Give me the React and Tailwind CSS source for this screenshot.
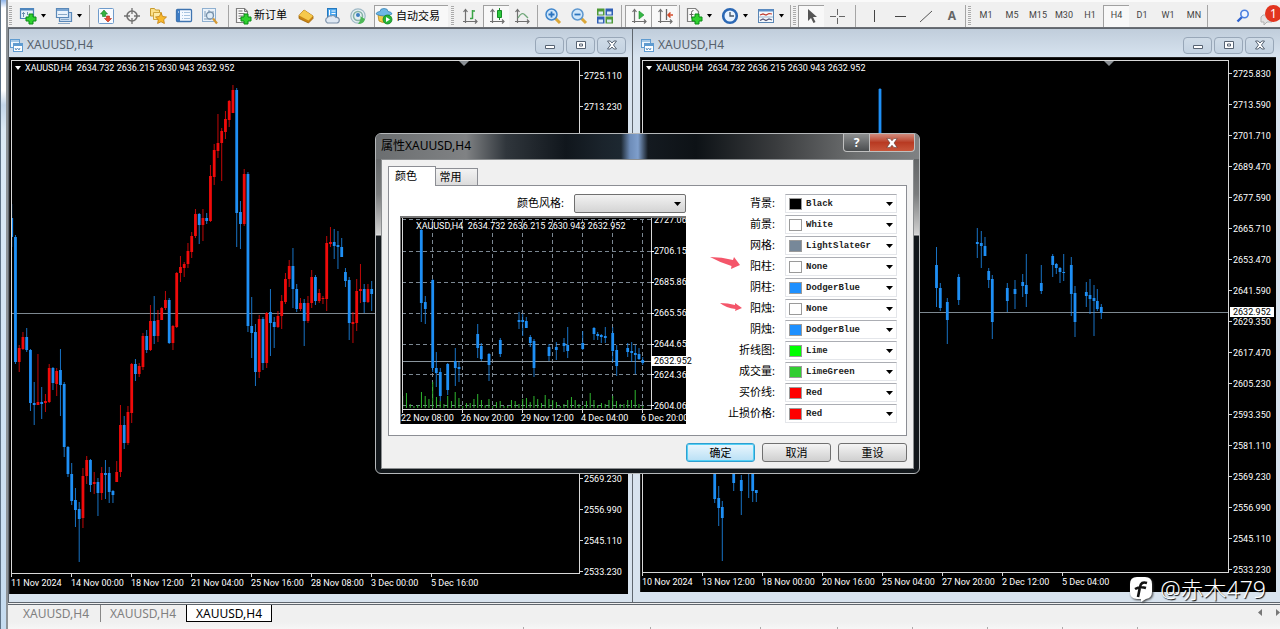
import { useState } from 'react';
import clsx from 'clsx';

const BLUE = '#1e8ff5';
const RED = '#f00a0a';

// [color, high, top, bottom, low]
const LEFT_CANDLES = [
  ['b', 204, 218, 237, 247], ['b', 235, 237, 362, 364], ['r', 345, 348, 362, 372], ['r', 332, 337, 349, 350],
  ['b', 328, 337, 350, 352], ['b', 349, 350, 403, 411], ['b', 382, 403, 405, 425], ['r', 354, 402, 405, 405],
  ['b', 387, 402, 404, 419], ['r', 394, 401, 403, 412], ['r', 364, 368, 402, 403], ['b', 367, 368, 383, 390],
  ['r', 368, 371, 384, 396], ['b', 349, 370, 385, 416], ['b', 382, 384, 447, 457], ['b', 446, 447, 474, 477],
  ['b', 463, 474, 501, 505], ['b', 488, 500, 510, 527], ['b', 502, 509, 519, 562], ['r', 468, 476, 518, 528],
  ['r', 456, 460, 476, 484], ['b', 459, 460, 485, 492], ['r', 472, 482, 484, 494], ['b', 478, 482, 493, 516],
  ['r', 467, 473, 493, 500], ['b', 460, 473, 475, 499], ['b', 467, 473, 492, 503], ['b', 490, 491, 495, 503],
  ['r', 461, 472, 482, 482], ['r', 405, 425, 472, 477], ['b', 416, 425, 443, 449], ['r', 406, 412, 443, 445],
  ['r', 363, 364, 413, 423], ['b', 359, 364, 374, 381], ['r', 363, 366, 374, 377], ['r', 333, 336, 367, 370],
  ['b', 330, 336, 350, 353], ['r', 305, 321, 350, 351], ['b', 296, 321, 336, 344], ['r', 310, 320, 336, 342],
  ['r', 307, 308, 320, 320], ['r', 291, 300, 308, 310], ['b', 298, 300, 343, 344], ['r', 325, 326, 343, 350],
  ['r', 272, 273, 327, 328], ['r', 256, 267, 273, 282], ['r', 262, 264, 268, 277], ['r', 243, 251, 264, 268],
  ['r', 232, 236, 252, 258], ['r', 209, 214, 236, 238], ['b', 213, 214, 225, 244], ['r', 209, 218, 225, 241],
  ['b', 213, 218, 221, 224], ['r', 165, 176, 221, 222], ['r', 144, 150, 177, 185], ['r', 114, 143, 151, 158],
  ['r', 128, 131, 143, 181], ['r', 111, 119, 132, 139], ['r', 100, 101, 120, 127], ['r', 85, 90, 113, 113],
  ['b', 88, 90, 213, 247], ['b', 201, 212, 224, 249], ['r', 169, 174, 224, 226], ['b', 172, 174, 326, 332],
  ['b', 297, 326, 333, 358], ['b', 324, 332, 372, 386], ['r', 315, 319, 372, 378], ['b', 317, 319, 363, 370],
  ['r', 312, 313, 363, 368], ['b', 289, 312, 323, 356], ['b', 317, 322, 327, 348], ['r', 311, 316, 327, 328],
  ['r', 295, 301, 316, 329], ['r', 273, 279, 302, 304], ['r', 260, 266, 279, 287], ['b', 248, 266, 289, 308],
  ['b', 284, 289, 309, 312], ['r', 298, 303, 309, 311], ['b', 299, 303, 321, 346], ['r', 296, 303, 321, 323],
  ['r', 270, 277, 303, 308], ['b', 275, 277, 301, 305], ['r', 289, 293, 301, 303], ['r', 296, 298, 299, 304],
  ['r', 236, 243, 299, 311], ['r', 227, 242, 244, 247], ['b', 229, 242, 246, 259], ['b', 231, 245, 247, 269],
  ['b', 238, 247, 257, 257], ['b', 268, 272, 281, 287], ['b', 277, 280, 323, 340], ['r', 312, 322, 324, 343],
  ['r', 279, 291, 323, 331], ['r', 264, 289, 291, 303], ['b', 284, 289, 302, 313], ['r', 284, 289, 302, 303],
  ['b', 281, 289, 294, 311],
].map(([color, ...prices], i) => [11.7 + i * 3.75, ...prices, color]);

// [x, high, top, bottom, low]
const RIGHT_CANDLES = [
  [714.7, 440, 445, 499, 503], [718.7, 486, 498, 508, 526], [722.3, 501, 507, 518, 561], [733.7, 440, 450, 483, 491],
  [741.3, 475, 480, 491, 515], [748.7, 440, 450, 452, 498], [752.7, 440, 450, 491, 502], [756.3, 490, 490, 493, 502],
  [880, 88, 89, 160, 170], [936.5, 247, 265, 288, 307], [940.3, 283, 288, 308, 311], [947.3, 298, 302, 320, 344],
  [958.7, 274, 277, 300, 305], [977.3, 228, 242, 244, 258], [981.3, 231, 243, 246, 268], [985, 237, 246, 256, 256],
  [988.7, 268, 271, 280, 288], [992.3, 275, 279, 322, 339], [1007.3, 283, 288, 301, 312], [1015, 280, 289, 294, 309],
  [1022.7, 274, 282, 286, 297], [1026.3, 254, 285, 294, 307], [1041.3, 265, 283, 291, 294], [1052.7, 254, 256, 265, 277],
  [1056.3, 263, 264, 268, 274], [1060, 267, 268, 272, 283], [1063.7, 254, 272, 273, 281], [1071.3, 257, 265, 294, 316],
  [1075, 286, 293, 322, 337], [1086.3, 282, 292, 296, 307], [1090, 279, 295, 299, 314], [1094, 285, 298, 301, 336],
  [1097.3, 289, 301, 309, 311], [1101.3, 304, 307, 313, 319],
];

const PREVIEW_CANDLES = [
  [421.3, 229, 230, 303, 322], [425.3, 296, 302, 309, 324], [432.7, 279, 280, 368, 372], [436.3, 352, 368, 373, 387],
  [440.3, 368, 372, 396, 401], [447.7, 363, 364, 390, 395], [455.3, 348, 361, 368, 386], [459, 362, 367, 369, 382],
  [477.7, 324, 334, 348, 358], [481.3, 343, 346, 359, 361], [489, 353, 354, 365, 381], [500.3, 338, 340, 354, 357],
  [519, 312, 320, 322, 329], [522.7, 314, 320, 322, 336], [526.3, 317, 321, 328, 328], [530.3, 335, 337, 343, 347],
  [534, 339, 341, 368, 377], [549, 344, 347, 356, 361], [556.3, 342, 347, 350, 360], [564, 338, 343, 346, 352],
  [567.7, 327, 345, 351, 358], [582.7, 331, 343, 349, 350], [594, 327, 328, 334, 340], [597.7, 332, 334, 336, 340],
  [601.3, 334, 335, 337, 343], [605.3, 327, 336, 338, 343], [612.7, 327, 333, 351, 362], [616.7, 345, 350, 366, 376],
  [627.7, 343, 348, 352, 357], [631.7, 342, 351, 353, 362], [635.3, 345, 353, 355, 374], [639, 348, 354, 359, 360],
  [642.7, 357, 360, 363, 365],
];

const VOLUMES = [
  12, 15, 4, 2, 3, 16, 12, 9, 26, 11, 7, 4, 12, 7, 16, 10, 2, 5, 5, 9, 14, 8, 3, 9, 2, 6, 7, 2, 2, 8, 7, 4, 9, 10,
  6, 12, 9, 5, 13, 9, 8, 6, 2, 4, 8, 11, 8, 4, 2, 7, 15, 8, 3, 5, 4, 8, 12, 7, 4, 4, 8, 8, 18, 4, 2,
];

const LEFT_PRICES = [
  '2725.110', '2713.230', '2701.350', '2689.110', '2677.230', '2665.350', '2653.110', '2641.230', '2629.350',
  '2617.110', '2605.230', '2593.350', '2581.110', '2569.230', '2556.990', '2545.110', '2533.230',
];
const RIGHT_PRICES = [
  '2725.830', '2713.590', '2701.710', '2689.470', '2677.590', '2665.710', '2653.470', '2641.590', '2629.350',
  '2617.470', '2605.230', '2593.350', '2581.110', '2569.230', '2556.990', '2545.110', '2533.230',
];
const LEFT_TIMES = ['11 Nov 2024', '14 Nov 00:00', '18 Nov 12:00', '21 Nov 04:00', '25 Nov 16:00', '28 Nov 08:00', '3 Dec 00:00', '5 Dec 16:00'];
const RIGHT_TIMES = ['10 Nov 2024', '13 Nov 12:00', '18 Nov 00:00', '20 Nov 16:00', '25 Nov 04:00', '27 Nov 20:00', '2 Dec 12:00', '5 Dec 04:00'];

const COLORS = {
  Black: '#000000',
  White: '#ffffff',
  LightSlateGr: '#778899',
  None: '#ffffff',
  DodgerBlue: '#1e90ff',
  Lime: '#00ff00',
  LimeGreen: '#32cd32',
  Red: '#ff0000',
};

const COLOR_FIELDS = [
  ['背景', 'Black'],
  ['前景', 'White'],
  ['网格', 'LightSlateGr'],
  ['阳柱', 'None'],
  ['阴柱', 'DodgerBlue'],
  ['阳烛', 'None'],
  ['阴烛', 'DodgerBlue'],
  ['折线图', 'Lime'],
  ['成交量', 'LimeGreen'],
  ['买价线', 'Red'],
  ['止损价格', 'Red'],
];

/* ---------- 工具栏 ---------- */

const Icon = ({ children }) => (
  <svg width="18" height="18" viewBox="0 0 18 18" fill="none" className="shrink-0">{children}</svg>
);

const Plus = ({ x, y }) => (
  <path transform={`translate(${x} ${y})`} d="M3 0h4v3h3v4H7v3H3V7H0V3h3z" fill="#2fd12f" stroke="#0b8a16" />
);

const Axes = () => (
  <path d="M4.500 3v13M2 14.500h14M2.500 5l2-2.500L6.500 5M14 12.500l2 2-2 2" stroke="#707070" strokeWidth="1.200" />
);

const icons = {
  newChart: (
    <Icon>
      <path d="M1.500 1.500h13v10h-13z" fill="#e6f1fb" stroke="#4f86bd" strokeWidth="1.200" />
      <path d="M1 2.500h14" stroke="#4f86bd" strokeWidth="2" />
      <path d="M4.500 5v5M3 6.500h3M8.500 5v3" stroke="#6a8fae" />
      <Plus x={7} y={7} />
    </Icon>
  ),
  profiles: (
    <Icon>
      <path d="M4.500 5.500h12v9h-12z" fill="#c9dcf0" stroke="#5a88b8" strokeWidth="1.200" />
      <path d="M1.500 1.500h12v9h-12z" fill="#eaf3fc" stroke="#5a88b8" strokeWidth="1.200" />
      <path d="M2 3h11" stroke="#79a5d3" strokeWidth="2" />
      <path d="M3 7.500h9M6 12.500h8M3 16.500h12" stroke="#8ba9c7" />
    </Icon>
  ),
  market: (
    <Icon>
      <rect x="1.500" y="1.500" width="15" height="15" rx="1" fill="#f8fbff" stroke="#6f9bcb" />
      <path d="M7 3 10.500 7H8.500v2.500h-3V7H3.500z" fill="#34b341" stroke="#128023" strokeWidth=".6" />
      <path d="M11 15 7.500 11.500h2V9h3v2.500h2z" fill="#e84c32" stroke="#b02a16" strokeWidth=".6" />
    </Icon>
  ),
  target: (
    <Icon>
      <circle cx="9" cy="9" r="5" stroke="#707070" strokeWidth="1.600" />
      <path d="M9 1v6M9 11v6M1 9h6M11 9h6" stroke="#707070" strokeWidth="1.300" />
    </Icon>
  ),
  navigator: (
    <Icon>
      <path d="M1.500 1.500h4l1 1.500h4v6h-9z" fill="#fbe08a" stroke="#c89b2e" />
      <path d="M4.500 5.500h8v7h-8z" fill="#fdeaa6" stroke="#d1a63c" />
      <path d="m12 6 1.700 3.500 3.800.5-2.800 2.700.7 3.800-3.400-1.800-3.400 1.800.7-3.800L6.500 10l3.800-.5z" fill="#f8b92c" stroke="#c07f12" strokeWidth=".8" />
    </Icon>
  ),
  terminal: (
    <Icon>
      <rect x="1.500" y="2.500" width="15" height="12" rx="1" fill="#f4f9ff" stroke="#3f74b0" strokeWidth="1.300" />
      <path d="M2 3h3v11H2z" fill="#3d7cc4" />
      <path d="M7 5.500h1M9 5.500h6M7 8.500h1M9 8.500h6M7 11.500h1M9 11.500h6" stroke="#a8c4e0" />
      <path d="M3 5h1" stroke="#fff" />
    </Icon>
  ),
  tester: (
    <Icon>
      <rect x="1.500" y="1.500" width="13" height="13" fill="#eaf2fa" stroke="#8fb0d0" />
      <path d="M4 4v6M8 3v4M12 4v6M3 12h7" stroke="#7e9cb8" />
      <circle cx="9" cy="8.500" r="3.500" fill="#dcebf7" fillOpacity=".8" stroke="#7690aa" strokeWidth="1.300" />
      <path d="m12 11.500 4 5" stroke="#d59a35" strokeWidth="2.200" />
    </Icon>
  ),
  order: (
    <Icon>
      <path d="M2.500 1.500h8l3 3v11h-11z" fill="#fafafa" stroke="#808080" strokeWidth="1.200" />
      <path d="M10.500 1.500v3h3M4.500 6.500h6M4.500 9h5M4.500 4h4M4.500 11.500h3" stroke="#777" />
      <Plus x={7} y={7} />
    </Icon>
  ),
  gold: (
    <Icon>
      <path d="m2 8.500 5-5.500 9 6v2.500L11.500 16 2 11.500z" fill="#c98413" stroke="#a0660a" strokeWidth=".8" />
      <path d="m2 8.500 5-5.500 9 6-4.500 4.500z" fill="#f6c94c" />
    </Icon>
  ),
  cloud: (
    <Icon>
      <rect x="4.500" y="1.500" width="9" height="9" fill="#4aa6ee" stroke="#2578bd" />
      <path d="M6.500 3v6M8.500 4h4M8.500 6.500h4" stroke="#fff" />
      <path d="M4.500 16a3 3 0 0 1 0-5.500q1-2 3.500-1.500 3-1.500 5 1.500a2.700 2.700 0 0 1 1 5.500z" fill="#dfe8f3" stroke="#7d92ab" strokeWidth="1.200" />
    </Icon>
  ),
  signal: (
    <Icon>
      <circle cx="9" cy="9" r="7.200" fill="#e4eef2" stroke="#9fb9c6" strokeWidth="1.200" />
      <circle cx="9" cy="9" r="4.500" stroke="#86b3a6" strokeWidth="1.500" />
      <path d="M9 8c4 1 3 5 0 9 4 0 6.500-2 7-5z" fill="#4db857" />
      <circle cx="9" cy="8" r="2" fill="#3f7fc2" />
    </Icon>
  ),
  auto: (
    <Icon>
      <path d="M3 8h11l-1 6q-5 3-9 0z" fill="#f3c948" stroke="#b68a1c" strokeWidth=".8" />
      <path d="M1 7q0-2 4-2.500 0-3 4-3t4 3q4 .5 4 2.500-8 4-16 0z" fill="#6eb7e6" stroke="#3884b5" strokeWidth=".8" />
      <circle cx="12.500" cy="12.500" r="4.500" fill="#25b436" stroke="#138322" strokeWidth=".8" />
      <path d="M11 10v5l4-2.500z" fill="#fff" />
    </Icon>
  ),
  bars: (
    <Icon>
      <Axes />
      <path d="M11.500 3v9M9 11.500h2.500M11.500 4h2.500" stroke="#3aa345" strokeWidth="1.500" />
    </Icon>
  ),
  candles: (
    <Icon>
      <Axes />
      <path d="M11.500 1v12" stroke="#168a26" />
      <path d="M9.500 3.500h4v7h-4z" fill="#2cc93c" stroke="#168a26" />
    </Icon>
  ),
  line: (
    <Icon>
      <Axes />
      <path d="M5 11q4-7 7-3l3 3" stroke="#6ea678" strokeWidth="1.300" />
    </Icon>
  ),
  zoomIn: (
    <Icon>
      <path d="m11 11 5 5" stroke="#dba739" strokeWidth="3" />
      <circle cx="7.500" cy="7.500" r="5.500" fill="#cfe6fa" stroke="#3f86cc" strokeWidth="1.500" />
      <path d="M4.500 7.500h6M7.500 4.500v6" stroke="#2c74be" strokeWidth="1.800" />
    </Icon>
  ),
  zoomOut: (
    <Icon>
      <path d="m11 11 5 5" stroke="#dba739" strokeWidth="3" />
      <circle cx="7.500" cy="7.500" r="5.500" fill="#cfe6fa" stroke="#5d97cf" strokeWidth="1.500" />
      <path d="M4.500 7.500h6" stroke="#2c74be" strokeWidth="1.800" />
    </Icon>
  ),
  tile: (
    <Icon>
      <path d="M1 1.500h7.500v7H1zM9.500 9.500H17v7H9.500z" fill="#4f9a37" />
      <path d="M9.500 1.500H17v7H9.500zM1 9.500h7.500v7H1z" fill="#2f5fb5" />
      <path d="M2.500 4.500H7v3H2.500zM11 4.500h4.500v3H11zM2.500 12.500H7v3H2.500zM11 12.500h4.500v3H11z" fill="#dcebf8" />
    </Icon>
  ),
  scroll: (
    <Icon>
      <Axes />
      <path d="M9 4v8l5-4z" fill="#35b845" stroke="#1b8a2a" strokeWidth=".6" />
    </Icon>
  ),
  shift: (
    <Icon>
      <Axes />
      <path d="M10.500 2v11" stroke="#666" strokeWidth="1.300" />
      <path d="M17 8h-5M14.500 5.500 12 8l2.500 2.500" stroke="#d24a2a" strokeWidth="1.500" />
    </Icon>
  ),
  indicators: (
    <Icon>
      <path d="M2.500 1.500h8l3 3v10h-11z" fill="#fafafa" stroke="#808080" strokeWidth="1.200" />
      <path d="M8.500 3.500q-2 0-2 2v6M4.500 7.500h4" stroke="#666" />
      <Plus x={7} y={7} />
    </Icon>
  ),
  clock: (
    <Icon>
      <circle cx="9" cy="9" r="6.800" fill="#e8f3ff" stroke="#2a67b4" strokeWidth="2.600" />
      <path d="M9 5v4h4" stroke="#456" strokeWidth="1.300" />
    </Icon>
  ),
  template: (
    <Icon>
      <rect x="1.500" y="2.500" width="15" height="13" fill="#f5f9fd" stroke="#5a86b5" />
      <path d="M2 3.500h14" stroke="#5a8fca" strokeWidth="2" />
      <path d="m3 8 3-1 3 1 3-1.500 3 .5" stroke="#c0392b" strokeWidth="1.200" />
      <path d="M2 10h14" stroke="#9db6cf" />
      <path d="m3 13.500 3-1.500 3 1.500 3-1.500 3 1" stroke="#557" strokeWidth="1.200" />
    </Icon>
  ),
  cursor: (
    <Icon><path d="M5 2v12l3-3 2.500 5 2-1-2.500-5h4z" fill="#555" /></Icon>
  ),
  cross: (
    <Icon><path d="M9.500 2v6M9.500 11v6M2 9.500h6M11 9.500h6" stroke="#666" /></Icon>
  ),
  vline: (
    <Icon><path d="M9.500 3v12" stroke="#444" /></Icon>
  ),
  hline: (
    <Icon><path d="M4 9.500h11" stroke="#444" /></Icon>
  ),
  trend: (
    <Icon><path d="M3 15 15 4" stroke="#555" /></Icon>
  ),
};

const Sep = ({ className }) => <span className={clsx('h-[22px] w-px shrink-0 bg-[#a5a5a5]', className)} />;

const Grip = ({ className }) => (
  <span className={clsx('h-5 w-[3px] shrink-0 bg-[repeating-linear-gradient(to_bottom,#aaa_0,#aaa_1px,#f4f4f4_1px,#f4f4f4_2px)]', className)} />
);

function Tool({ label, name, active, caret, children }) {
  return (
    <button
      type="button"
      aria-label={label}
      className={clsx(
        'flex h-[22px] shrink-0 items-center',
        caret ? 'w-9' : 'w-[26px] justify-center',
        active && 'border-t border-l border-[#a0a0a0] bg-[#f8f8f8]'
      )}
    >
      {caret ? <span className="flex w-6 justify-center">{icons[name]}</span> : icons[name]}
      {caret && <svg width="7" height="4" viewBox="0 0 7 4"><path d="M1 0h5L3.500 3.500z" fill="#000" /></svg>}
      {children}
    </button>
  );
}

function Toolbar() {
  const [frame, setFrame] = useState('H4');
  return (
    <header className="flex h-7 shrink-0 items-center overflow-hidden border-t-2 border-b border-t-[#fafafa] border-b-[#6b6f75] bg-[#f0f0f0] pt-[2px] text-black">
      <Grip className="mr-1 ml-px" />
      <Tool label="新图表" name="newChart" caret />
      <Tool label="配置" name="profiles" caret />
      <Sep className="mr-[3px] ml-px" />
      <Tool label="市场报价" name="market" />
      <Tool label="数据窗口" name="target" />
      <Tool label="导航" name="navigator" />
      <Tool label="终端" name="terminal" />
      <Tool label="测试" name="tester" />
      <Sep className="mx-[5px]" />
      <button type="button" className="flex h-[22px] shrink-0 items-center gap-[2px] pr-[6px] text-[11px]">
        {icons.order}
        新订单
      </button>
      <Tool label="编辑器" name="gold" />
      <Tool label="云" name="cloud" />
      <Tool label="信号" name="signal" />
      <button type="button" className="ml-[3px] flex h-[22px] w-[74px] shrink-0 items-center gap-[3px] border-t border-l border-[#a0a0a0] bg-[#f8f8f8] text-[11px]">
        {icons.auto}
        自动交易
      </button>
      <Grip className="mx-[3px]" />
      <Tool label="柱状图" name="bars" />
      <Tool label="蜡烛图" name="candles" active />
      <Tool label="折线图" name="line" />
      <Sep className="mx-[2px]" />
      <Tool label="放大" name="zoomIn" />
      <Tool label="缩小" name="zoomOut" />
      <Tool label="平铺窗口" name="tile" />
      <Sep className="mx-[3px]" />
      <Tool label="自动滚动" name="scroll" active />
      <Tool label="图表平移" name="shift" active />
      <Sep className="mx-[2px]" />
      <Tool label="指标" name="indicators" caret />
      <Tool label="时段" name="clock" caret />
      <Tool label="模板" name="template" caret />
      <Sep />
      <Grip className="mx-[2px]" />
      <Tool label="光标" name="cursor" active />
      <Tool label="十字准线" name="cross" />
      <Sep className="mx-[5px]" />
      <Tool label="垂直线" name="vline" />
      <Tool label="水平线" name="hline" />
      <Tool label="趋势线" name="trend" />
      <Tool label="文字">
        <span className="text-xs font-bold text-[#666]">A</span>
      </Tool>
      <Sep />
      <Grip className="mx-[2px]" />
      {['M1', 'M5', 'M15', 'M30', 'H1', 'H4', 'D1', 'W1', 'MN'].map((f) => (
        <button
          key={f}
          type="button"
          onClick={() => setFrame(f)}
          className={clsx(
            'h-[22px] w-[26px] shrink-0 text-center font-[Roboto] text-[9px] text-[#444]',
            f === frame && 'border-t border-l border-[#a0a0a0] bg-[#f8f8f8]'
          )}
        >
          {f}
        </button>
      ))}
      <Sep />
      <div className="flex-1" />
      <button type="button" aria-label="搜索" className="mr-[10px] shrink-0">
        <svg width="14" height="14" viewBox="0 0 14 14" fill="none">
          <path d="m1.500 12.500 5-5" stroke="#2d62cf" strokeWidth="2.400" />
          <circle cx="8.500" cy="5" r="3.700" fill="#eef4ff" stroke="#4b7fe0" strokeWidth="1.600" />
        </svg>
      </button>
      <div className="relative h-[22px] w-5 shrink-0">
        <svg width="14" height="12" viewBox="0 0 14 12" className="absolute top-[9px] left-0">
          <path d="M3 1h9v7H7l-3 3V8H1V3z" fill="#e2e2e2" stroke="#b3b3b3" />
        </svg>
        <span className="absolute top-0 left-[5px] h-[17px] w-[17px] rounded-full bg-[#e2351f] pl-[5px] text-[12px] leading-[17px] text-white">1</span>
      </div>
    </header>
  );
}

/* ---------- 图表窗口 ---------- */

function Candles({ data }) {
  return data.map(([x, high, top, bottom, low, color]) => {
    const fill = color === 'r' ? RED : BLUE;
    return (
      <g key={x} fill={fill}>
        <rect x={x - 0.5} y={high} width="1" height={low - high} opacity=".8" />
        <rect x={x - 1.4} y={top} width="2.800" height={Math.max(bottom - top, 1)} />
      </g>
    );
  });
}

const WindowIcon = () => (
  <svg width="13" height="13" viewBox="0 0 13 13" fill="none" className="shrink-0">
    <rect x=".5" y=".5" width="9" height="8" fill="#eef6fd" stroke="#5f9bd0" />
    <path d="M1 2h8" stroke="#5f9bd0" />
    <rect x="3.500" y="4.500" width="9" height="8" fill="#fff" stroke="#5f9bd0" />
    <path d="M4 6h8" stroke="#5f9bd0" strokeWidth="2" />
    <path d="m5 9 1 2 1.500-2L9 11l1-2" stroke="#5d93c5" />
  </svg>
);

function CaptionButton({ label, children }) {
  return (
    <button
      type="button"
      aria-label={label}
      className="flex h-[17px] w-[29px] items-center justify-center rounded-sm border border-[#98a7b8] bg-linear-to-b from-[#cfdbe7] to-[#c3d2e1]"
    >
      <svg width="12" height="10" viewBox="0 0 12 10" fill="#fff" stroke="#566373">{children}</svg>
    </button>
  );
}

function ChartWindow({ candles, originX, priceY, markerRight, prices, times, low, offset }) {
  return (
    <section className="flex min-w-0 flex-col border-l border-[#5f666e] bg-[#d8e3ee]">
      <div
        className={clsx(
          'flex h-7 shrink-0 items-center gap-1 bg-linear-to-b from-[#c0cddb] to-[#d7e3ef] pt-1 pr-[6px]',
          offset ? 'pl-2' : 'pl-px'
        )}
      >
        <WindowIcon />
        <h2 className="flex-1 font-['Noto_Sans'] text-xs text-[#56616c]">XAUUSD,H4</h2>
        <div className="flex gap-[2px]">
          <CaptionButton label="最小化"><path d="M1.500 5.500h9v3h-9z" /></CaptionButton>
          <CaptionButton label="最大化"><path d="M1.500 1.500h9v7h-9zM4.500 4h3v2h-3z" /></CaptionButton>
          <CaptionButton label="关闭"><path d="M1.500 1h2.700L6 3l1.800-2h2.700L7.500 5l3 4H7.800L6 7 4.200 9H1.500l3-4z" /></CaptionButton>
        </div>
      </div>
      <div
        className={clsx(
          'mr-1 flex flex-1 border-t border-l border-[#222] bg-black font-[Roboto] text-[9px] leading-3 text-white',
          low ? 'mb-2' : 'mb-[10px]',
          offset && 'ml-[7px]'
        )}
      >
        <div className="flex min-w-0 flex-1 flex-col pt-[2px] pl-px">
          <div className="relative border border-[#d8d8d8]">
            <svg className={clsx('block w-full', low ? 'h-[512px]' : 'h-[511px]')}>
              <line x1="0" x2="100%" y1={priceY - 60.5} y2={priceY - 60.5} stroke="#7d8890" />
              <g transform={`translate(${-originX} -61)`}>
                <Candles data={candles} />
              </g>
            </svg>
            <svg width="10" height="5" viewBox="0 0 10 5" className={clsx('absolute top-0', markerRight)}>
              <path d="M0 0h10L5 5z" fill="#8a8f94" />
            </svg>
            <p className="absolute top-px left-[3px] flex items-center gap-1 whitespace-pre">
              <svg width="6" height="4" viewBox="0 0 6 4"><path d="M0 0h6L3 4z" fill="#fff" /></svg>
              {'XAUUSD,H4  2634.732 2636.215 2630.943 2632.952'}
            </p>
          </div>
          <div className="flex">
            {times.map((t) => (
              <div key={t} className="w-[60px] shrink-0 whitespace-nowrap">
                <span className="block h-[3px] w-px bg-[#d8d8d8]" />
                {t}
              </div>
            ))}
          </div>
        </div>
        <div className={clsx('relative shrink-0', low ? 'w-12 pt-[2px]' : 'w-[47px]')}>
          {prices.map((p) => (
            <div key={p} className="flex h-[31px] items-center gap-px">
              <span className="h-px w-[3px] bg-[#d8d8d8]" />
              {p}
            </div>
          ))}
          <span className="absolute top-[249px] left-px h-[10px] w-[44px] bg-white pl-[3px] leading-[10px] text-black">2632.952</span>
        </div>
      </div>
    </section>
  );
}

/* ---------- 属性对话框 ---------- */

function Preview() {
  return (
    <div className="relative mt-[3px] border-t-2 border-l border-[#777] bg-black font-[Roboto] text-[9px]">
      <svg width="285" height="206" viewBox="401 218 285 206" className="block">
        <g stroke="#7b8792" strokeDasharray="4 3">
          {[219.5, 251.5, 282.5, 313.5, 344.5, 374.5, 405.5].map((y) => <line key={y} x1="402" x2="651" y1={y} y2={y} />)}
          {[433, 463, 493, 523, 553, 583, 613, 643].map((x) => <line key={x} x1={x - 0.5} x2={x - 0.5} y1="219" y2="409" />)}
        </g>
        <line x1="402" x2="651" y1="361.500" y2="361.500" stroke="#8a959d" />
        {VOLUMES.map((v, i) => (
          <rect key={i} x={402.2 + i * 3.75} y={408 - v} width="1" height={v} fill="#2eb52e" />
        ))}
        <Candles data={PREVIEW_CANDLES} />
        <path d="M402.500 218v191.500M402 409.500h249.500M651.500 218v191.500" stroke="#d8d8d8" fill="none" />
        {[402, 462, 522, 582, 642].map((x) => <rect key={x} x={x} y="409" width="1" height="4" fill="#d8d8d8" />)}
        <g fill="#fff">
          <text x="416" y="229" xmlSpace="preserve">{'XAUUSD,H4  2634.732 2636.215 2630.943 2632.952'}</text>
          {['2727.06', '2706.15', '2685.86', '2665.56', '2644.65', '2624.36', '2604.06'].map((p, i) => (
            <text key={p} x="654" y={223 + i * 31}>{p}</text>
          ))}
          {[251, 282, 313, 344, 374, 405].map((y) => <rect key={y} x="651" y={y} width="3" height="1" />)}
          {['22 Nov 08:00', '26 Nov 20:00', '29 Nov 12:00', '4 Dec 04:00', '6 Dec 20:00'].map((t, i) => (
            <text key={t} x={401 + i * 60} y="421">{t}</text>
          ))}
        </g>
      </svg>
      <span className="absolute top-[138px] left-[250px] h-[10px] bg-white pl-[3px] leading-[10px] text-black">2632.952</span>
    </div>
  );
}

const Caret = () => (
  <svg width="7" height="4" viewBox="0 0 7 4" className="pointer-events-none shrink-0"><path d="M0 0h7L3.500 4z" fill="#000" /></svg>
);

function ColorField({ label, initial }) {
  const [value, setValue] = useState(initial);
  return (
    <label className="flex h-[19px] items-center justify-end gap-[10px]">
      <span>{label}:</span>
      <span className="flex h-[19px] w-[112px] items-center gap-1 border border-[#e4e6ea] border-t-[#abadb3] bg-white pr-[3px] pl-[3px]">
        <span className="h-3 w-[13px] shrink-0 border border-[#9a9a9a]" style={{ background: COLORS[value] }} />
        <select
          value={value}
          onChange={(e) => setValue(e.target.value)}
          className="min-w-0 flex-1 appearance-none bg-transparent pt-[2px] font-['Liberation_Mono',monospace] text-[9px] font-bold text-[#222] outline-none"
        >
          {Object.keys(COLORS).map((c) => <option key={c}>{c}</option>)}
        </select>
        <Caret />
      </span>
    </label>
  );
}

function PushButton({ primary, children }) {
  return (
    <button
      type="button"
      className={clsx(
        'h-[19px] w-[69px] rounded-[3px] border text-[11px] leading-[17px]',
        primary
          ? 'border-[#2f9fd0] bg-linear-to-b from-[#eaf6fd] to-[#b9e0f5] ring-1 ring-[#54d0f5] ring-inset'
          : 'border-[#707070] bg-linear-to-b from-[#f4f4f4] to-[#cfcfcf]'
      )}
    >
      {children}
    </button>
  );
}

function PropertiesDialog() {
  return (
    <div
      role="dialog"
      aria-label="属性XAUUSD,H4"
      className="absolute top-[133px] left-[375px] w-[545px] rounded-md border border-[#b5b8ba] bg-[linear-gradient(to_bottom,#55585a_0,#7a7c7d_60px,#d0d0d0_100px,#e6e6e6_101px,#12171b_102px,#12171b_100%)] px-[5px] pb-1 text-black"
    >
      <div className="-mx-[5px] flex h-[25px] rounded-t-[5px] bg-[linear-gradient(to_right,#6b6e70_0,#808284_90px,#30363c_130px,#10161c_190px,#1a232b_225px,#1d2831_245px,#6d8cb8_254px,#7f9fcc_262px,#141a20_272px,#0d1216_320px,#3a3c3e_400px,#6d6f70_480px,#808284_546px)] pr-1 pl-[5px]">
        <h2 className="flex-1 text-xs leading-6">属性XAUUSD,H4</h2>
        <button type="button" aria-label="帮助" className="h-[18px] w-[27px] rounded-bl-[4px] border border-t-0 border-[#c0c0c0] bg-linear-to-b from-[#8d8f90] to-[#4b4e50] text-[12px] leading-4 font-bold text-white">?</button>
        <button type="button" aria-label="关闭" className="flex h-[18px] w-[45px] items-center justify-center rounded-br-[4px] border border-t-0 border-l-0 border-[#c0c0c0] bg-linear-to-b from-[#d08a7c] via-[#b83a22] to-[#c8553a]">
          <svg width="12" height="10" viewBox="0 0 12 10" fill="#fff" stroke="#5a3a36" strokeWidth=".6">
            <path d="M.8.600h3.400L6 2.800 7.800.600h3.400L8 5l3.200 4.400H7.800L6 7.200 4.200 9.400H.8L4 5z" />
          </svg>
        </button>
      </div>
      <div className="border border-[#8b8e90] bg-[#f0f0f0] px-[6px] pt-[6px] pb-[6px]">
        <div role="tablist" className="flex items-end text-[11px]">
          <button type="button" role="tab" aria-selected="true" className="relative -mb-px h-5 w-12 border border-b-0 border-[#8c8e94] bg-white pr-3">颜色</button>
          <button type="button" role="tab" aria-selected="false" className="h-[17px] w-[42px] border border-b-0 border-l-0 border-[#8c8e94] bg-linear-to-b from-[#f3f3f3] to-[#dcdcdc] pr-3 leading-4">常用</button>
        </div>
        <div className="flex justify-between border border-[#8c8e94] bg-white pt-2 pr-[9px] pb-[11px] pl-[11px] text-[11px]">
          <div className="w-[286px]">
            <label className="flex h-[19px] items-center justify-end gap-[10px]">
              <span>颜色风格:</span>
              <span className="flex h-[19px] w-[112px] items-center rounded-[2px] border border-[#707070] bg-linear-to-b from-[#f2f2f2] to-[#d4d4d4] pr-1">
                <select className="min-w-0 flex-1 appearance-none outline-none" defaultValue="">
                  <option value=""></option>
                </select>
                <Caret />
              </span>
            </label>
            <Preview />
          </div>
          <div className="flex flex-col gap-[2px]">
            {COLOR_FIELDS.map(([label, initial]) => <ColorField key={label} label={label} initial={initial} />)}
          </div>
        </div>
        <div className="mt-[7px] flex justify-end gap-[7px]">
          <PushButton primary>确定</PushButton>
          <PushButton>取消</PushButton>
          <PushButton>重设</PushButton>
        </div>
      </div>
      <svg width="34" height="56" viewBox="0 0 34 56" className="pointer-events-none absolute top-[121px] left-[333px]" fill="#f4566a">
        <path d="M1 2q12 0 23 3l1-3 6 8-9 4 .5-3Q12 8 1 2z" />
        <path d="M11 48q8 0 15 2v-2l7 5-7 3 .5-2Q17 53 11 48z" />
      </svg>
    </div>
  );
}

/* ---------- 页面 ---------- */

export default function App() {
  return (
    <div className="relative flex min-h-screen w-full overflow-hidden bg-[#f0f0f0] font-['Noto_Sans','Noto_Sans_CJK_SC',sans-serif]">
      <div className="w-2 shrink-0 border-r-2 border-l border-r-[#8d9296] border-l-[#5f7387] bg-[linear-gradient(to_bottom,#8fb5ea_0,#fff_8px,#fff_90px,#c4d6ea_105px,#dceaf6_130px,#c6dcf0_100%)]" />
      <div className="flex min-w-0 flex-1 flex-col">
        <Toolbar />
        <main className="grid flex-1 grid-cols-[624fr_648fr] border-t border-b-[3px] border-double border-[#5f666e]">
          <ChartWindow candles={LEFT_CANDLES} originX={12} priceY={313} markerRight="right-[110px]" prices={LEFT_PRICES} times={LEFT_TIMES} low />
          <ChartWindow candles={RIGHT_CANDLES} originX={643} priceY={312} markerRight="right-[114px]" prices={RIGHT_PRICES} times={RIGHT_TIMES} offset />
        </main>
        <div className="flex h-[17px] shrink-0 items-start text-xs leading-[18px] text-[#808080]">
          <nav className="flex">
            <a href="#chart-1" className="h-[17px] w-[92px] pl-[15px]">XAUUSD,H4</a>
            <a href="#chart-2" className="h-[17px] w-[86px] border-l border-[#888] pl-[9px]">XAUUSD,H4</a>
            <a href="#chart-3" className="h-[17px] w-[86px] border border-t-0 border-black bg-white pl-[9px] text-black">XAUUSD,H4</a>
          </nav>
          <div className="flex flex-1 justify-end gap-3 pt-1">
            <svg width="5" height="7" viewBox="0 0 5 7"><path d="M4 0v7L0 3.500z" fill="#777" /></svg>
            <svg width="5" height="7" viewBox="0 0 5 7"><path d="M1 0v7l4-3.500z" fill="#777" /></svg>
          </div>
        </div>
        <footer className="flex h-[7px] shrink-0 items-end bg-linear-to-b from-[#f0f0f0] to-[#f6f6f6]">
          <span className="h-[2px] w-[516px] border-r border-[#aaa]" />
          <span className="h-[2px] w-[127px] border-r border-[#aaa]" />
          <span className="h-[2px] w-[110px] border-r border-[#aaa]" />
          <span className="h-[2px] w-[77px] border-r border-[#aaa]" />
          <span className="h-[2px] w-[75px] border-r border-[#aaa]" />
          <span className="h-[2px] w-[75px] border-r border-[#aaa]" />
          <span className="h-[2px] w-[75px] border-r border-[#aaa]" />
          <span className="h-[2px] w-[75px] border-r border-[#aaa]" />
        </footer>
      </div>
      <PropertiesDialog />
      <div className="pointer-events-none absolute right-[14px] bottom-6 flex items-center gap-2 text-[23px] leading-8 font-light text-white [text-shadow:1px_1px_1px_#000]">
        <svg width="22" height="25" viewBox="0 0 22 25" className="drop-shadow-[1px_1px_1px_#333]">
          <path d="M7 0h8q7 0 7 7v8q0 6-6 7l-5 3v-3H7q-7 0-7-7V7q0-7 7-7z" fill="#fff" />
          <path d="M17 6q-6-2-7 4l-2 10M5 12q5-3 11-1" fill="none" stroke="#111" strokeWidth="2.600" />
        </svg>
        @赤木479
      </div>
    </div>
  );
}
